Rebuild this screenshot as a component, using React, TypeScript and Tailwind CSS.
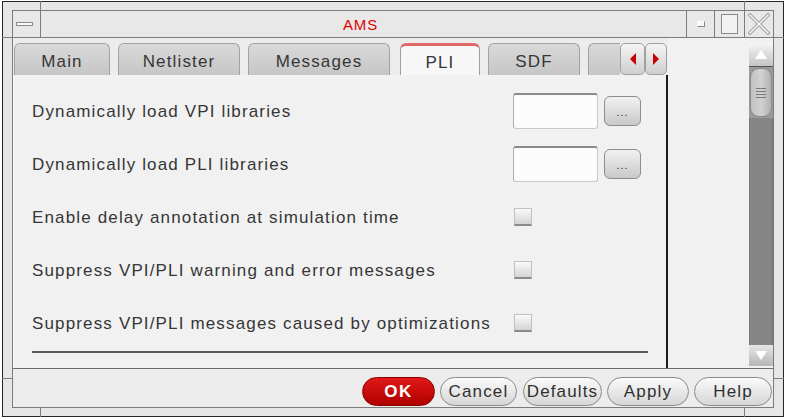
import React from "react";

function Tab({ label, w, active }: { label: string; w: string; active?: boolean }) {
  return (
    <div
      className={
        "h-[32px] shrink-0 rounded-t-[6px] border border-b-0 flex items-center justify-center pt-[3px] " +
        w +
        (active
          ? " bg-[#f7f7f7] border-[#a0a0a0] border-t-[3px] border-t-[#e06a6a]"
          : " bg-gradient-to-b from-[#d9d9d9] to-[#c6c6c6] border-[#a2a2a2]")
      }
    >
      <span className="leading-none">{label}</span>
    </div>
  );
}

function Field() {
  return (
    <div className="flex items-center gap-[6px]">
      <div className="w-[85px] h-[36px] bg-[#fcfcfc] rounded-[3px] border border-[#c8c8c8] border-t-2 border-t-[#8a8a8a] border-l-[#b0b0b0]" />
      <div className="w-[37px] h-[30px] rounded-[6px] border border-[#8d8d8d] bg-gradient-to-b from-[#f2f2f2] to-[#c9c9c9] flex items-center justify-center text-[11px] tracking-[1px] text-[#333] pt-[2px]">
        ...
      </div>
    </div>
  );
}

function Check() {
  return (
    <div className="w-[18px] h-[18px] ml-[1px] bg-gradient-to-b from-[#fafafa] to-[#d4d4d4] border border-[#c0c0c0] border-b-2 border-b-[#8a8a8a]" />
  );
}

function Row({ label, children }: { label: string; children: React.ReactNode }) {
  return (
    <div className="h-[36px] flex items-center">
      <div className="w-[481px] shrink-0 pt-[2px]">{label}</div>
      {children}
    </div>
  );
}

function PillButton({ label, w, ok }: { label: string; w: string; ok?: boolean }) {
  return (
    <div
      className={
        "h-[29px] rounded-full flex items-center justify-center shrink-0 " +
        w +
        (ok
          ? " bg-gradient-to-b from-[#e01818] to-[#b00000] border border-[#8a0000] text-white font-bold tracking-[1.5px]"
          : " bg-gradient-to-b from-[#fbfbfb] to-[#d6d6d6] border border-[#8a8a8a] text-[#303030]")
      }
    >
      <span className="leading-none">{label}</span>
    </div>
  );
}

export default function App() {
  return (
    <div className="w-[788px] h-[420px] bg-white relative overflow-hidden pt-[1px] pl-[2px] font-['Liberation_Sans',Arial,sans-serif] text-[17px] tracking-[1.15px] text-[#363636]">
      <div className="w-[782px] h-[416px] border border-[#262626] bg-[#e6e6e6] pt-[8px] pb-[8px] px-[9px]">
        <div className="w-full h-full border border-[#7c7c7c] flex flex-col bg-[#ececec]">
          {/* title bar */}
          <div className="h-[27px] shrink-0 border-b border-[#7c7c7c] flex bg-[#e8e8e8]">
            <div className="w-[28px] border-r border-[#7c7c7c] flex items-center justify-center">
              <div className="w-[17px] h-[4px] border border-[#8a8a8a] bg-[#fafafa] ml-[-4px]" />
            </div>
            <div className="flex-1 flex items-center justify-center text-[15px] tracking-[0.8px] text-[#dd0000] pr-[6px] pt-[2px]">
              AMS
            </div>
            <div className="w-[28px] border-l border-[#7c7c7c] flex items-center justify-center">
              <div className="w-[8px] h-[6px] border border-[#888] bg-[#f8f8f8] border-t-[#fff] border-l-[#fff]" />
            </div>
            <div className="w-[30px] border-l border-[#7c7c7c] flex items-center justify-center">
              <div className="w-[17px] h-[20px] border border-[#8a8a8a] bg-[#f2f2f2]" />
            </div>
            <div className="w-[29px] border-l border-[#7c7c7c] flex items-center justify-center">
              <svg width="22" height="22" viewBox="0 0 22 22">
                <path d="M2 2 L20 20 M20 2 L2 20" stroke="#a0a0a0" strokeWidth="3.5" strokeLinecap="square" />
                <path d="M2 2 L20 20 M20 2 L2 20" stroke="#f6f6f6" strokeWidth="1.5" strokeLinecap="square" />
              </svg>
            </div>
          </div>

          {/* body */}
          <div className="flex-1 flex min-h-0">
            <div className="w-[655px] shrink-0 flex flex-col pt-[5px]">
              {/* tabs */}
              <div className="h-[32px] shrink-0 flex items-end pl-[1px] overflow-hidden">
                <Tab label="Main" w="w-[96px]" />
                <div className="w-[8px] shrink-0" />
                <Tab label="Netlister" w="w-[122px]" />
                <div className="w-[8px] shrink-0" />
                <Tab label="Messages" w="w-[142px]" />
                <div className="w-[10px] shrink-0" />
                <Tab label="PLI" w="w-[80px]" active />
                <div className="w-[8px] shrink-0" />
                <Tab label="SDF" w="w-[92px]" />
                <div className="w-[8px] shrink-0" />
                <Tab label="" w="w-[32px] rounded-tr-none border-r-0" />
                <div className="w-[25px] h-[32px] shrink-0 rounded-[5px] border border-[#a0a0a0] bg-gradient-to-b from-[#f4f4f4] to-[#cfcfcf] flex items-center justify-center">
                  <svg width="8" height="12" viewBox="0 0 8 12">
                    <path d="M7 0 L1 6 L7 12 Z" fill="#cc0000" />
                  </svg>
                </div>
                <div className="w-[22px] h-[32px] shrink-0 rounded-[5px] border border-[#a0a0a0] bg-gradient-to-b from-[#f4f4f4] to-[#cfcfcf] flex items-center justify-center">
                  <svg width="8" height="12" viewBox="0 0 8 12">
                    <path d="M1 0 L7 6 L1 12 Z" fill="#cc0000" />
                  </svg>
                </div>
              </div>
              {/* panel */}
              <div className="flex-1 bg-[#f1f1f1] border-l border-l-[#fafafa] border-r-2 border-r-[#1c1c1c] pt-[18px] pl-[18px] flex flex-col">
                <div className="flex flex-col gap-[17px]">
                  <Row label="Dynamically load VPI libraries">
                    <Field />
                  </Row>
                  <Row label="Dynamically load PLI libraries">
                    <Field />
                  </Row>
                  <Row label="Enable delay annotation at simulation time">
                    <Check />
                  </Row>
                  <Row label="Suppress VPI/PLI warning and error messages">
                    <Check />
                  </Row>
                  <Row label="Suppress VPI/PLI messages caused by optimizations">
                    <Check />
                  </Row>
                </div>
                <div className="mt-[10px] w-[616px] h-[2px] bg-[#5a5a5a]" />
              </div>
            </div>
            <div className="flex-1 bg-[#f1f1f1]" />
            {/* scrollbar */}
            <div className="w-[24px] shrink-0 pt-[5px] pb-[2px] flex flex-col bg-[#f1f1f1]">
              <div className="h-[24px] shrink-0 bg-gradient-to-b from-[#f6f6f6] to-[#c4c4c4] border-b border-[#555] flex items-center justify-center">
                <svg width="12" height="9" viewBox="0 0 12 9">
                  <path d="M6 0 L12 9 L0 9 Z" fill="#ffffff" />
                </svg>
              </div>
              <div className="h-[51px] shrink-0 bg-[#9a9a9a] flex">
                <div className="flex-1 m-[1px] rounded-[9px] bg-gradient-to-r from-[#c2c2c2] via-[#d2d2d2] to-[#b2b2b2] border border-[#8c8c8c] flex flex-col items-center justify-center gap-[2px]">
                  <div className="w-[10px] h-[1px] bg-[#7a7a7a]" />
                  <div className="w-[10px] h-[1px] bg-[#7a7a7a]" />
                  <div className="w-[10px] h-[1px] bg-[#7a7a7a]" />
                  <div className="w-[10px] h-[1px] bg-[#7a7a7a]" />
                </div>
              </div>
              <div className="flex-1 bg-[#868686] border-x border-[#777]" />
              <div className="h-[21px] shrink-0 bg-gradient-to-b from-[#e6e6e6] to-[#b6b6b6] flex items-center justify-center">
                <svg width="12" height="9" viewBox="0 0 12 9">
                  <path d="M0 0 L12 0 L6 9 Z" fill="#ffffff" />
                </svg>
              </div>
            </div>
          </div>

          {/* button area */}
          <div className="h-[39px] shrink-0 border-t border-[#6c6c6c] flex justify-end items-start pt-[8px] pr-[1px] bg-[#ececec]">
            <PillButton label="OK" w="w-[73px]" ok />
            <div className="w-[5px]" />
            <PillButton label="Cancel" w="w-[77px]" />
            <div className="w-[6px]" />
            <PillButton label="Defaults" w="w-[79px]" />
            <div className="w-[5px]" />
            <PillButton label="Apply" w="w-[82px]" />
            <div className="w-[5px]" />
            <PillButton label="Help" w="w-[78px]" />
          </div>
        </div>
      </div>

      {/* window frame resize ticks */}
      <div className="absolute left-[40px] top-[1px] w-[1px] h-[10px] bg-[#7c7c7c]" />
      <div className="absolute left-[744px] top-[1px] w-[1px] h-[10px] bg-[#7c7c7c]" />
      <div className="absolute left-[40px] top-[408px] w-[1px] h-[9px] bg-[#7c7c7c]" />
      <div className="absolute left-[744px] top-[408px] w-[1px] h-[9px] bg-[#7c7c7c]" />
      <div className="absolute left-[2px] top-[37px] w-[10px] h-[1px] bg-[#7c7c7c]" />
      <div className="absolute left-[774px] top-[37px] w-[10px] h-[1px] bg-[#7c7c7c]" />
      <div className="absolute left-[2px] top-[378px] w-[10px] h-[1px] bg-[#7c7c7c]" />
      <div className="absolute left-[774px] top-[378px] w-[10px] h-[1px] bg-[#7c7c7c]" />
    </div>
  );
}
